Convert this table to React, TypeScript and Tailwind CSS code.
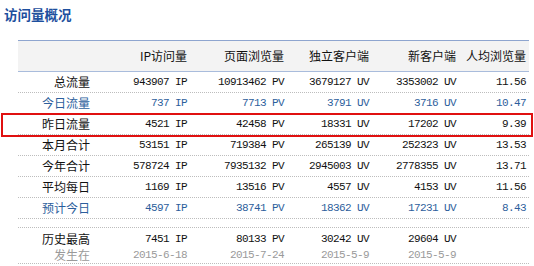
type Tone = 'normal' | 'blue';

interface StatRow {
  label: string;
  tone: Tone;
  ip: string;
  pv: string;
  uv: string;
  newUv: string;
  avg: string;
  highlight?: boolean;
}

const rows: StatRow[] = [
  { label: '总流量', tone: 'normal', ip: '943907', pv: '10913462', uv: '3679127', newUv: '3353002', avg: '11.56' },
  { label: '今日流量', tone: 'blue', ip: '737', pv: '7713', uv: '3791', newUv: '3716', avg: '10.47' },
  { label: '昨日流量', tone: 'normal', ip: '4521', pv: '42458', uv: '18331', newUv: '17202', avg: '9.39', highlight: true },
  { label: '本月合计', tone: 'normal', ip: '53151', pv: '719384', uv: '265139', newUv: '252323', avg: '13.53' },
  { label: '今年合计', tone: 'normal', ip: '578724', pv: '7935132', uv: '2945003', newUv: '2778355', avg: '13.71' },
  { label: '平均每日', tone: 'normal', ip: '1169', pv: '13516', uv: '4557', newUv: '4153', avg: '11.56' },
  { label: '预计今日', tone: 'blue', ip: '4597', pv: '38741', uv: '18362', newUv: '17231', avg: '8.43' },
];

const headers = ['', 'IP访问量', '页面浏览量', '独立客户端', '新客户端', '人均浏览量'];

const grid = 'grid grid-cols-[75px_97px_97px_85px_87px_70px]';
const cjk = "font-['Noto_Sans_CJK_SC','Liberation_Sans',sans-serif] text-[12px]";
const mono = "font-['Liberation_Mono',monospace] text-[11px] tracking-[-0.6px]";
const cell = 'flex items-center justify-end pr-[3px] whitespace-nowrap';

const toneClass = (tone: Tone) => (tone === 'blue' ? 'text-[#2c5e9c]' : 'text-[#111]');

const DataRow = ({ row }: { row: StatRow }) => {
  const color = toneClass(row.tone);
  return (
    <div className={`${grid} relative h-[21px] border-b border-dotted border-[#bdbdbd] ${color}`}>
      <div className={`${cell} ${cjk}`}>{row.label}</div>
      <div className={`${cell} ${mono}`}>{row.ip} IP</div>
      <div className={`${cell} ${mono}`}>{row.pv} PV</div>
      <div className={`${cell} ${mono}`}>{row.uv} UV</div>
      <div className={`${cell} ${mono}`}>{row.newUv} UV</div>
      <div className={`${cell} ${mono}`}>{row.avg}</div>
      {row.highlight && (
        <div className="absolute left-[-17px] top-[-1px] h-[24px] w-[532px] border-2 border-[#e01010] pointer-events-none" />
      )}
    </div>
  );
};

export default function App() {
  return (
    <div className="w-[534px] h-[266px] bg-white overflow-hidden">
      <div className="h-[40px] pl-[4px] pt-[6px]">
        <h2 className="font-['Noto_Sans_CJK_SC',sans-serif] text-[13.5px] leading-[16px] font-bold text-[#1d4f9e]">
          访问量概况
        </h2>
      </div>

      <div className="ml-[18px] w-[511px]">
        <div className={`${grid} h-[32px] bg-[#f3f3f3] border-t border-t-[#8ea5cf] border-b border-b-[#a9bcdc] text-[#111]`}>
          {headers.map((h, i) => (
            <div key={i} className={`${cell} ${cjk}`}>
              {h}
            </div>
          ))}
        </div>

        {rows.map((row) => (
          <DataRow key={row.label} row={row} />
        ))}

        <div className="h-[9px] border-b border-dotted border-[#bdbdbd]" />

        <div className={`${grid} h-[36px] border-b border-dotted border-[#bdbdbd] pt-[3px]`}>
          <div className="flex flex-col items-end pr-[3px]">
            <span className={`${cjk} leading-[16px] text-[#111]`}>历史最高</span>
            <span className={`${cjk} leading-[16px] text-[#9a9a9a]`}>发生在</span>
          </div>
          {[
            ['7451 IP', '2015-6-18'],
            ['80133 PV', '2015-7-24'],
            ['30242 UV', '2015-5-9'],
            ['29604 UV', '2015-5-9'],
          ].map(([value, date]) => (
            <div key={value} className="flex flex-col items-end pr-[3px]">
              <span className={`${mono} leading-[16px] text-[#111]`}>{value}</span>
              <span className={`${mono} leading-[16px] text-[#9a9a9a]`}>{date}</span>
            </div>
          ))}
          <div />
        </div>
      </div>
    </div>
  );
}
